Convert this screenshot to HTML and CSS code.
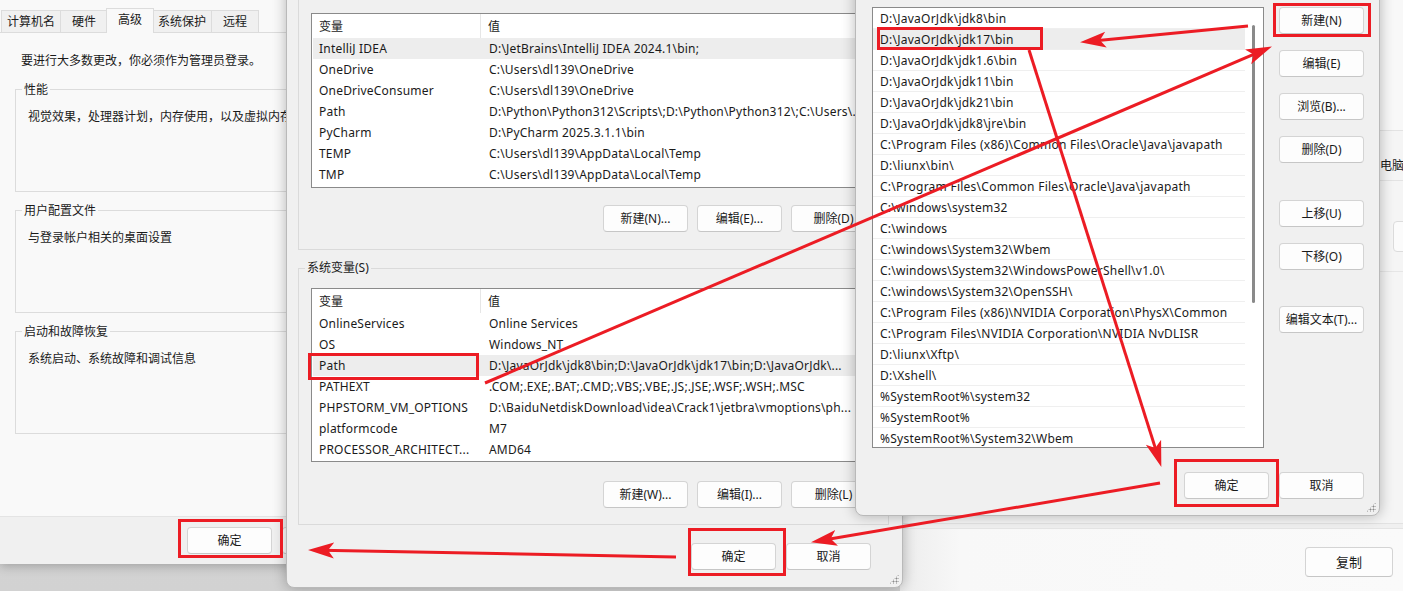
FILE: index.html
```html
<!DOCTYPE html>
<html lang="zh-CN">
<head>
<meta charset="utf-8">
<title>环境变量</title>
<link rel="stylesheet" href="styles.css">
</head>
<body>
<div class="desk">

  <div class="bgwin">
    <div class="bg-upper">
      <div class="bg-block"></div>
      <div class="bg-row"><span class="bg-text">重命名这台电脑</span></div>
      <div class="bg-row2"><div class="bg-box"></div></div>
    </div>
    <div class="bg-foot">
      <button class="btn copy">复制</button>
    </div>
  </div>

  <div class="win sysprop">
    <div class="tabs">
      <div class="tab">计算机名</div>
      <div class="tab">硬件</div>
      <div class="tab active">高级</div>
      <div class="tab">系统保护</div>
      <div class="tab">远程</div>
    </div>
    <div class="page">
      <p class="notice">要进行大多数更改，你必须作为管理员登录。</p>
      <fieldset class="grp"><legend>性能</legend><p class="desc">视觉效果，处理器计划，内存使用，以及虚拟内存。</p></fieldset>
      <fieldset class="grp"><legend>用户配置文件</legend><p class="desc">与登录帐户相关的桌面设置</p></fieldset>
      <fieldset class="grp"><legend>启动和故障恢复</legend><p class="desc">系统启动、系统故障和调试信息</p></fieldset>
    </div>
    <div class="foot">
      <button class="btn">确定</button>
      <button class="btn">取消</button>
      <button class="btn">应用(A)</button>
    </div>
  </div>

  <div class="win envvars">
    <fieldset class="vgrp user">
      <legend>dl139 的用户变量(U)</legend>
      <div class="lv lv-user">
        <div class="lv-head"><span>变量</span><span class="c2">值</span></div>
        <div class="lv-row sel"><span>IntelliJ IDEA</span><span>D:\JetBrains\IntelliJ IDEA 2024.1\bin;</span></div>
        <div class="lv-row"><span>OneDrive</span><span>C:\Users\dl139\OneDrive</span></div>
        <div class="lv-row"><span>OneDriveConsumer</span><span>C:\Users\dl139\OneDrive</span></div>
        <div class="lv-row"><span>Path</span><span>D:\Python\Python312\Scripts\;D:\Python\Python312\;C:\Users\...</span></div>
        <div class="lv-row"><span>PyCharm</span><span>D:\PyCharm 2025.3.1.1\bin</span></div>
        <div class="lv-row"><span>TEMP</span><span>C:\Users\dl139\AppData\Local\Temp</span></div>
        <div class="lv-row"><span>TMP</span><span>C:\Users\dl139\AppData\Local\Temp</span></div>
      </div>
      <div class="btnrow">
        <button class="btn">新建(N)...</button>
        <button class="btn">编辑(E)...</button>
        <button class="btn">删除(D)</button>
      </div>
    </fieldset>
    <fieldset class="vgrp sys">
      <legend>系统变量(S)</legend>
      <div class="lv lv-sys">
        <div class="lv-head"><span>变量</span><span class="c2">值</span></div>
        <div class="lv-row"><span>OnlineServices</span><span>Online Services</span></div>
        <div class="lv-row"><span>OS</span><span>Windows_NT</span></div>
        <div class="lv-row sel"><span>Path</span><span>D:\JavaOrJdk\jdk8\bin;D:\JavaOrJdk\jdk17\bin;D:\JavaOrJdk\...</span></div>
        <div class="lv-row"><span>PATHEXT</span><span>.COM;.EXE;.BAT;.CMD;.VBS;.VBE;.JS;.JSE;.WSF;.WSH;.MSC</span></div>
        <div class="lv-row"><span>PHPSTORM_VM_OPTIONS</span><span>D:\BaiduNetdiskDownload\idea\Crack1\jetbra\vmoptions\ph...</span></div>
        <div class="lv-row"><span>platformcode</span><span>M7</span></div>
        <div class="lv-row"><span>PROCESSOR_ARCHITECT...</span><span>AMD64</span></div>
      </div>
      <div class="btnrow">
        <button class="btn">新建(W)...</button>
        <button class="btn">编辑(I)...</button>
        <button class="btn">删除(L)</button>
      </div>
    </fieldset>
    <div class="dlg-foot mid-foot">
      <button class="btn">确定</button>
      <button class="btn">取消</button>
    </div>
    <div class="grip"></div>
  </div>

  <div class="win editenv">
    <div class="ee-main">
      <div class="ee-list">
        <div class="ee-rows">
          <div class="ee-row">D:\JavaOrJdk\jdk8\bin</div>
          <div class="ee-row sel">D:\JavaOrJdk\jdk17\bin</div>
          <div class="ee-row">D:\JavaOrJdk\jdk1.6\bin</div>
          <div class="ee-row">D:\JavaOrJdk\jdk11\bin</div>
          <div class="ee-row">D:\JavaOrJdk\jdk21\bin</div>
          <div class="ee-row">D:\JavaOrJdk\jdk8\jre\bin</div>
          <div class="ee-row">C:\Program Files (x86)\Common Files\Oracle\Java\javapath</div>
          <div class="ee-row">D:\liunx\bin\</div>
          <div class="ee-row">C:\Program Files\Common Files\Oracle\Java\javapath</div>
          <div class="ee-row">C:\windows\system32</div>
          <div class="ee-row">C:\windows</div>
          <div class="ee-row">C:\windows\System32\Wbem</div>
          <div class="ee-row">C:\windows\System32\WindowsPowerShell\v1.0\</div>
          <div class="ee-row">C:\windows\System32\OpenSSH\</div>
          <div class="ee-row">C:\Program Files (x86)\NVIDIA Corporation\PhysX\Common</div>
          <div class="ee-row">C:\Program Files\NVIDIA Corporation\NVIDIA NvDLISR</div>
          <div class="ee-row">D:\liunx\Xftp\</div>
          <div class="ee-row">D:\Xshell\</div>
          <div class="ee-row">%SystemRoot%\system32</div>
          <div class="ee-row">%SystemRoot%</div>
          <div class="ee-row">%SystemRoot%\System32\Wbem</div>
        </div>
        <div class="ee-scroll"><div class="ee-thumb"></div></div>
      </div>
      <div class="ee-btns">
        <button class="btn">新建(N)</button>
        <button class="btn">编辑(E)</button>
        <button class="btn">浏览(B)...</button>
        <button class="btn">删除(D)</button>
        <button class="btn sep1">上移(U)</button>
        <button class="btn">下移(O)</button>
        <button class="btn sep2">编辑文本(T)...</button>
      </div>
    </div>
    <div class="dlg-foot ee-foot">
      <button class="btn">确定</button>
      <button class="btn">取消</button>
    </div>
    <div class="grip"></div>
  </div>

  <svg class="annot" width="1403" height="591" viewBox="0 0 1403 591" xmlns="http://www.w3.org/2000/svg">
    <defs>
      <marker id="ah" viewBox="0 0 26 18" refX="13" refY="9" markerWidth="26" markerHeight="18" markerUnits="userSpaceOnUse" orient="auto">
        <path d="M0 1 L26 9 L0 17 L6 9 Z" fill="#ec1c24"/>
      </marker>
    </defs>
    <g fill="none" stroke="#ec1c24" stroke-width="3">
      <rect x="179.5" y="520.5" width="102" height="36"/>
      <rect x="309.5" y="354.5" width="168" height="24"/>
      <rect x="689.5" y="529.5" width="95" height="45"/>
      <rect x="878.5" y="28.5" width="163" height="20"/>
      <rect x="1274.5" y="4.5" width="95" height="31"/>
      <rect x="1175.5" y="460.5" width="102" height="45"/>
      <line x1="676" y1="557" x2="321" y2="550.2" marker-end="url(#ah)"/>
      <line x1="1160" y1="483" x2="823.8" y2="540" marker-end="url(#ah)"/>
      <line x1="1248" y1="26" x2="1093" y2="40.9" marker-end="url(#ah)"/>
      <line x1="1029" y1="50" x2="1157.4" y2="454.6" marker-end="url(#ah)"/>
      <line x1="485" y1="383" x2="1260" y2="51.7" marker-end="url(#ah)"/>
    </g>
  </svg>
</div>
</body>
</html>
```

FILE: styles.css
```css
* { box-sizing: border-box; }
html, body { margin: 0; padding: 0; }
body {
  font-family: "Segoe UI", "Noto Sans", "Noto Sans CJK SC", sans-serif;
  font-size: 12px;
  color: #1a1a1a;
  background: #d8d8d8;
}
p { margin: 0; }

.desk {
  position: relative;
  width: 1403px;
  height: 591px;
  overflow: hidden;
  background: linear-gradient(#dcdcdc, #d2d2d2);
}

/* generic windows */
.win {
  position: absolute;
  overflow: hidden;
}

.btn {
  font: inherit;
  color: #1a1a1a;
  width: 85px;
  height: 27px;
  padding: 0;
  background: #fdfdfd;
  border: 1px solid #d4d4d4;
  border-bottom-color: #c6c6c6;
  border-radius: 4px;
  line-height: 25px;
  text-align: center;
  flex: none;
}

/* background window (far right) */
.bgwin {
  position: absolute;
  left: 900px;
  top: 0;
  right: 0;
  bottom: 0;
  background: #f5f5f5;
  display: flex;
  flex-direction: column;
}
.bg-upper { padding-left: 400px; flex: 1; }
.bg-block { height: 131px; border-bottom: 1px solid #e3e3e3; background: #f8f8f8; }
.bg-row { height: 50px; border-bottom: 1px solid #e3e3e3; padding: 27px 0 0 20px; line-height: 16px; white-space: nowrap; }
.bg-text { color: #1a1a1a; }
.bg-row2 { height: 91px; border-bottom: 1px solid #e6e6e6; padding: 40px 0 0 93px; }
.bg-box { width: 40px; height: 31px; border: 1px solid #dcdcdc; border-radius: 4px; background: #fbfbfb; }
.bg-foot {
  height: 68px;
  border-top: 1px solid #e2e2e2;
  box-shadow: inset 0 4px 0 #f0f0f0, inset 0 5px 0 #e4e4e4;
  background: linear-gradient(90deg, #ececec, #f8f8f8 12%, #fafafa);
  display: flex;
  justify-content: flex-end;
  padding: 23px 10px 0 0;
}
.copy { width: 88px; height: 30px; line-height: 28px; font-size: 13px; }

/* left: system properties */
.sysprop {
  left: 0;
  top: 0;
  width: 440px;
  height: 564px;
  background: #f9f9f9;
  display: flex;
  flex-direction: column;
  box-shadow: 0 2px 10px rgba(0, 0, 0, 0.25);
}
.tabs {
  height: 32px;
  display: flex;
  align-items: flex-end;
  padding-left: 1px;
  position: relative;
  z-index: 1;
}
.tab {
  height: 22px;
  min-width: 48px;
  padding: 0 5px;
  border: 1px solid #dcdcdc;
  border-bottom: none;
  margin-right: -1px;
  background: #f0f0f0;
  line-height: 22px;
  text-align: center;
  white-space: nowrap;
}
.tab.active {
  height: 25px;
  margin: 0 -2px -1px -1px;
  background: #f9f9f9;
  position: relative;
  line-height: 22px;
  padding: 0 6px;
}
.page {
  flex: 1;
  border-top: 1px solid #dcdcdc;
  padding: 19px 0 0 15px;
}
.notice { line-height: 17px; margin-left: 6px; white-space: nowrap; }
.grp {
  width: 400px;
  height: 111px;
  margin: 0 0 10px 0;
  padding: 0 0 0 6px;
  border: 1px solid #dcdcdc;
  min-width: 0;
}
.sysprop .grp:first-of-type { margin-top: 12px; }
.grp legend { padding: 0 2px; line-height: 17px; }
.desc { padding: 11px 0 0 6px; line-height: 16px; white-space: nowrap; }
.foot {
  height: 48px;
  flex: none;
  background: #f0f0f0;
  border-top: 1px solid #e4e4e4;
  display: flex;
  gap: 10px;
  padding: 10px 0 0 187px;
}

/* middle: environment variables */
.envvars {
  left: 286px;
  top: -30px;
  width: 617px;
  height: 618px;
  background: #f0f0f0;
  border: 1px solid #b9b9b9;
  border-radius: 8px;
  padding: 15px 13px 0 11px;
  box-shadow: 0 0 14px rgba(0, 0, 0, 0.28);
}
.vgrp {
  margin: 0;
  border: 1px solid #dadada;
  padding: 0 12px 17px 12px;
  min-width: 0;
}
.vgrp legend { padding: 0 2px; margin-left: -6px; line-height: 16px; white-space: nowrap; }
.vgrp.sys { margin-top: 10px; padding-bottom: 16px; }
.lv {
  background: #fff;
  border: 1px solid #8a8a8a;
  overflow: hidden;
}
.lv-user { margin-top: 11px; height: 175px; }
.lv-sys { margin-top: 12px; height: 174px; }
.lv-head, .lv-row {
  display: grid;
  grid-template-columns: 168px 1fr;
  white-space: nowrap;
}
.lv-head { height: 24px; line-height: 25px; overflow: hidden; }
.lv-head span { padding-left: 7px; }
.lv-head .c2 { border-left: 1px solid #e6e6e6; padding-left: 7px; }
.lv-row { height: 21px; line-height: 20px; padding-top: 1px; margin-left: 1px; overflow: hidden; letter-spacing: 0.2px; }
.lv-row span { overflow: hidden; padding-left: 6px; }
.lv-row span + span { padding-left: 8px; }
.lv-row.sel { background: #ededed; }
.btnrow {
  display: flex;
  justify-content: flex-end;
  gap: 9px;
  margin-top: 17px;
}
.vgrp.sys .btnrow { margin-top: 19px; }
.dlg-foot {
  display: flex;
  justify-content: flex-end;
  gap: 10px;
}
.mid-foot { margin-top: 18px; padding-right: 18px; }

.grip {
  position: absolute;
  right: 3px;
  bottom: 3px;
  width: 10px;
  height: 10px;
  background:
    radial-gradient(circle, #8a8a8a 0.8px, transparent 1.2px) 0 0 / 3px 3px;
  clip-path: polygon(100% 0, 100% 100%, 0 100%);
}

/* right: edit environment variable */
.editenv {
  left: 855px;
  top: -19px;
  width: 525px;
  height: 535px;
  background: #f0f0f0;
  border: 1px solid #b9b9b9;
  border-radius: 8px;
  padding: 25px 15px 0 16px;
  box-shadow: 0 0 14px rgba(0, 0, 0, 0.28);
}
.ee-main { display: flex; gap: 15px; }
.ee-list {
  width: 392px;
  height: 441px;
  border: 1px solid #8a8a8a;
  background: #fff;
  display: flex;
  overflow: hidden;
}
.ee-rows { flex: 1; min-width: 0; }
.ee-row {
  height: 21px;
  line-height: 20px;
  padding-top: 1px;
  border-bottom: 1px solid #efefef;
  padding-left: 7px;
  white-space: nowrap;
  overflow: hidden;
  letter-spacing: 0.25px;
}
.ee-row.sel { background: #ededed; }
.ee-scroll { width: 18px; flex: none; }
.ee-thumb {
  width: 3px;
  height: 278px;
  margin: 17px 0 0 7px;
  background: #8a8a8a;
  border-radius: 2px;
}
.ee-btns {
  width: 85px;
  display: flex;
  flex-direction: column;
  gap: 16px;
}
.ee-btns .sep1 { margin-top: 21px; }
.ee-btns .sep2 { margin-top: 20px; }
.ee-foot { margin-top: 24px; }

/* annotations */
.annot {
  position: absolute;
  left: 0;
  top: 0;
  pointer-events: none;
}
```
